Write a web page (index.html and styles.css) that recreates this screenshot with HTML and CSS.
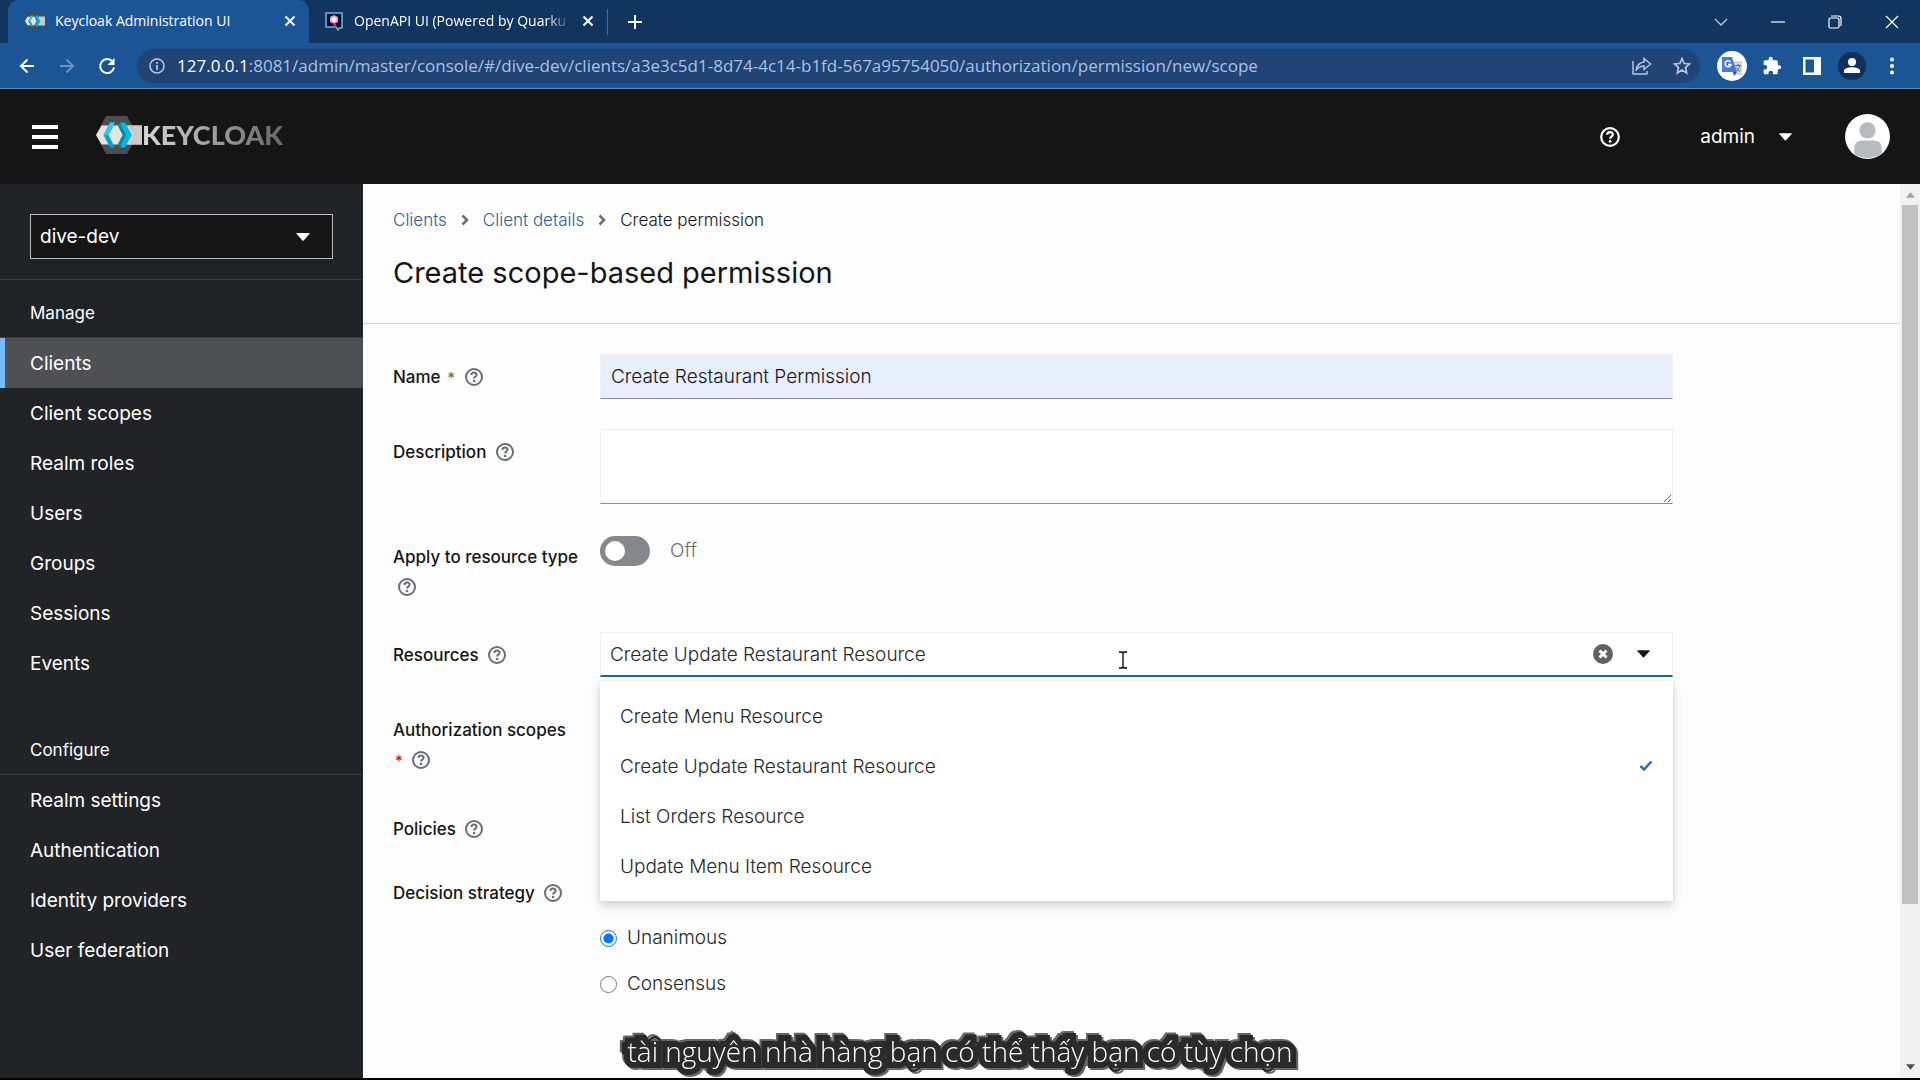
FILE: index.html
```html
<!DOCTYPE html>
<html lang="en">
<head>
    <meta charset="UTF-8">
    <meta name="viewport" content="width=device-width, initial-scale=1.0">
    <title>Keycloak Administration UI</title>
    <link rel="stylesheet" href="styles.css">
</head>
<body>
    <svg class="defs" aria-hidden="true">
        <symbol id="help" viewBox="0 0 20 20">
            <circle cx="10" cy="10" r="8" fill="none" stroke="currentColor" stroke-width="2"/>
            <path d="M7.400 8c0-3.200 5.200-3.200 5.200-.2 0 1.800-2.500 1.800-2.500 3.700" fill="none" stroke="currentColor" stroke-width="2"/>
            <circle cx="10.100" cy="14" r="1.300" fill="currentColor"/>
        </symbol>
        <symbol id="caret" viewBox="0 0 14 8">
            <path d="M1 0h12q1 .3.4 1L7.600 7.600q-.6.6-1.200 0L.6 1Q0 .3 1 0z" fill="currentColor"/>
        </symbol>
        <symbol id="close" viewBox="0 0 12 12">
            <path d="M1.500 1.500l9 9m0-9l-9 9" fill="none" stroke="currentColor" stroke-width="2"/>
        </symbol>
        <symbol id="angle" viewBox="0 0 8 12">
            <path d="M1.500 1.500L6 6l-4.500 4.500" fill="none" stroke="currentColor" stroke-width="2.500"/>
        </symbol>
        <symbol id="mark" viewBox="0 0 46 38">
            <path d="M10 0h21l10.500 19L31 38H10L0 19z" fill="#4d4d4d"/>
            <path d="M5.500 9.500H46v19H5.500L0 19z" fill="#e4e4e4"/>
            <path d="M32 9.500h14v19H32l5-9.500z" fill="#c9c9c9"/>
            <path d="M14 6.500h5L12.500 19 19 31.500h-5L7.500 19z" fill="#00a5cb"/>
            <path d="M14 6.500h5L12.500 19h-5z" fill="#33c6e9"/>
            <path d="M24 6.500h5L36 19l-7 12.500h-5L30.500 19z" fill="#00b8e3"/>
            <path d="M24 6.500L30.500 19 24 31.500l-2-3.500 4.500-9L22 10z" fill="#008aaa"/>
        </symbol>
    </svg>

    <div class="tabstrip">
        <div class="tab active">
            <svg class="favicon" aria-hidden="true"><use href="#mark"/></svg>
            <span class="tab-title">Keycloak Administration UI</span>
            <button type="button" class="icon-btn" aria-label="Close tab"><svg width="12" height="12"><use href="#close"/></svg></button>
        </div>
        <div class="tab">
            <svg class="favicon" viewBox="0 0 20 20" aria-hidden="true">
                <path d="M2 2h16v15h-3l-1 2-2-3H2z" fill="#0b0b2e" stroke="#6fb7e8" stroke-width="1.500"/>
                <path d="M10 4l4 2v5l-4 2-4-2V6z" fill="#e8a3c4"/>
                <circle cx="10" cy="8.500" r="2.200" fill="#fff"/>
                <path d="M9 12l2 0 2 5-3-2z" fill="#d2436e"/>
            </svg>
            <span class="tab-title faded">OpenAPI UI (Powered by Quarku</span>
            <button type="button" class="icon-btn" aria-label="Close tab"><svg width="12" height="12"><use href="#close"/></svg></button>
        </div>
        <button type="button" class="icon-btn new-tab" aria-label="New tab">
            <svg width="14" height="14" viewBox="0 0 14 14"><path d="M7 0v14M0 7h14" stroke="#fff" stroke-width="2"/></svg>
        </button>
        <div class="window-buttons">
            <button type="button" class="icon-btn" aria-label="Search tabs"><svg width="14" height="14" viewBox="0 0 14 14"><path d="M1 4l6 6 6-6" fill="none" stroke="#b7cdf0" stroke-width="1.300"/></svg></button>
            <button type="button" class="icon-btn" aria-label="Minimize"><svg width="14" height="14" viewBox="0 0 14 14"><path d="M0 7h14" stroke="#fff" stroke-width="1.200"/></svg></button>
            <button type="button" class="icon-btn" aria-label="Restore"><svg width="14" height="14" viewBox="0 0 14 14" fill="none" stroke="#fff" stroke-width="1.200"><rect x="1" y="3" width="10" height="10" rx="1.500"/><path d="M3 1h7.500q2.500 0 2.500 2.500V11"/></svg></button>
            <button type="button" class="icon-btn" aria-label="Close"><svg width="14" height="14" viewBox="0 0 14 14"><path d="M1 1l12 12m0-12L1 13" stroke="#fff" stroke-width="1.200"/></svg></button>
        </div>
    </div>

    <div class="toolbar">
        <button type="button" class="icon-btn" aria-label="Back"><svg width="16" height="16" viewBox="0 0 16 16"><path d="M15 8H2m6.500-6.500L2 8l6.500 6.500" fill="none" stroke="#fff" stroke-width="2"/></svg></button>
        <button type="button" class="icon-btn" aria-label="Forward"><svg width="16" height="16" viewBox="0 0 16 16"><path d="M1 8h13M7.500 1.500L14 8l-6.500 6.500" fill="none" stroke="#6f93c4" stroke-width="2"/></svg></button>
        <button type="button" class="icon-btn" aria-label="Reload"><svg width="18" height="18" viewBox="0 0 18 18"><path d="M14.500 4.500A7 7 0 1 0 16 10.500" fill="none" stroke="#fff" stroke-width="2"/><path d="M16.500 1v7h-7z" fill="#fff"/></svg></button>
        <div class="address">
            <svg width="16" height="16" viewBox="0 0 16 16" aria-hidden="true"><circle cx="8" cy="8" r="7" fill="none" stroke="#b9cbe6" stroke-width="1.500"/><path d="M8 7v5M8 4v1.800" stroke="#b9cbe6" stroke-width="1.700"/></svg>
            <span class="url"><b>127.0.0.1</b>:8081/admin/master/console/#/dive-dev/clients/a3e3c5d1-8d74-4c14-b1fd-567a95754050/authorization/permission/new/scope</span>
            <button type="button" class="icon-btn" aria-label="Share"><svg width="20" height="18" viewBox="0 0 20 18" fill="none" stroke="#b3c6e4" stroke-width="1.500"><path d="M1 4v13h14v-3"/><path d="M12 5V1.500L18.500 7 12 12.500V9q-5 0-8 4.500Q5 6 12 5z"/></svg></button>
            <button type="button" class="icon-btn" aria-label="Bookmark"><svg width="18" height="18" viewBox="0 0 18 18"><path d="M9 1.500l2.200 5 5.300.5-4 3.600 1.200 5.300L9 13l-4.700 2.900 1.200-5.300-4-3.600 5.300-.5z" fill="none" stroke="#b3c6e4" stroke-width="1.700"/></svg></button>
        </div>
        <div class="extensions">
            <button type="button" class="icon-btn" aria-label="Translate">
                <svg width="30" height="30" viewBox="0 0 30 30"><circle cx="15" cy="15" r="15" fill="#fff"/><path d="M13 10h12v14H17z" fill="#d3d7dc"/><path d="M5 6h10l5 15H5z" fill="#4a78d4"/><path d="M16 21l4 0-3 4z" fill="#2a4f9e"/><path d="M13.500 11a3 3 0 1 0 .5 2.500h-3" fill="none" stroke="#fff" stroke-width="1.500"/><path d="M18.500 14.500h5.500m-3-1.500v1.500m2 0q-1 4-3.500 5.500m-.5-3.500q1.500 3 4 4" fill="none" stroke="#5f6b7c" stroke-width="1"/></svg>
            </button>
            <button type="button" class="icon-btn" aria-label="Extensions"><svg width="20" height="20" viewBox="0 0 24 24"><path d="M20.500 11H19V7a2 2 0 0 0-2-2h-4V3.500a2.500 2.500 0 0 0-5 0V5H4a2 2 0 0 0-2 2v3.800h1.500a2.700 2.700 0 0 1 0 5.400H2V20a2 2 0 0 0 2 2h3.800v-1.500a2.700 2.700 0 0 1 5.400 0V22H17a2 2 0 0 0 2-2v-4h1.500a2.500 2.500 0 0 0 0-5z" fill="#fff"/></svg></button>
            <button type="button" class="icon-btn" aria-label="Side panel"><svg width="18" height="18" viewBox="0 0 18 18"><path d="M0 0h18v18H0zM2.500 2.500v13H11v-13z" fill="#fff" fill-rule="evenodd"/></svg></button>
            <button type="button" class="icon-btn" aria-label="Profile"><svg width="28" height="28" viewBox="0 0 28 28"><circle cx="14" cy="14" r="14" fill="#14305a"/><circle cx="14" cy="10" r="4" fill="#fff"/><path d="M6 21v-2c0-5 16-5 16 0v2z" fill="#fff"/></svg></button>
            <button type="button" class="icon-btn" aria-label="Menu"><svg width="4" height="18" viewBox="0 0 4 18" fill="#fff"><circle cx="2" cy="2.500" r="2"/><circle cx="2" cy="9" r="2"/><circle cx="2" cy="15.500" r="2"/></svg></button>
        </div>
    </div>

    <header class="masthead">
        <button type="button" class="icon-btn" aria-label="Global navigation">
            <svg width="26" height="24" viewBox="0 0 26 24" fill="#fff"><path d="M0 0h26v4H0zM0 10h26v4H0zM0 20h26v4H0z"/></svg>
        </button>
        <a href="#" class="logo"><svg width="46" height="38" aria-hidden="true"><use href="#mark"/></svg><span>KEYCLOAK</span></a>
        <button type="button" class="icon-btn help-top" aria-label="Help"><svg width="22" height="22"><use href="#help"/></svg></button>
        <button type="button" class="user-btn">admin <svg width="13" height="8" aria-hidden="true"><use href="#caret"/></svg></button>
        <svg class="avatar" viewBox="0 0 44 44" role="img" aria-label="Avatar">
            <circle cx="22" cy="22" r="22" fill="#fff"/>
            <circle cx="22" cy="16" r="8" fill="#b8bbbe"/>
            <path d="M9 39.500V34q0-8 8-8h11q8 0 8 8v4.500Q23 47 9 39.500z" fill="#b8bbbe"/>
        </svg>
    </header>

    <div class="page">
        <nav class="sidebar" aria-label="Global">
            <div class="realm">
                <select class="realm-select" aria-label="Realm">
                    <option>dive-dev</option>
                </select>
                <svg class="realm-caret" width="14" height="8" aria-hidden="true"><use href="#caret"/></svg>
            </div>
            <h2 class="nav-title">Manage</h2>
            <ul class="nav-list">
                <li><a href="#" class="current">Clients</a></li>
                <li><a href="#">Client scopes</a></li>
                <li><a href="#">Realm roles</a></li>
                <li><a href="#">Users</a></li>
                <li><a href="#">Groups</a></li>
                <li><a href="#">Sessions</a></li>
                <li><a href="#">Events</a></li>
            </ul>
            <h2 class="nav-title">Configure</h2>
            <ul class="nav-list">
                <li><a href="#">Realm settings</a></li>
                <li><a href="#">Authentication</a></li>
                <li><a href="#">Identity providers</a></li>
                <li><a href="#">User federation</a></li>
            </ul>
        </nav>

        <main class="main">
            <div class="page-header">
                <nav class="breadcrumb" aria-label="Breadcrumb">
                    <a href="#">Clients</a>
                    <svg width="8" height="12" aria-hidden="true"><use href="#angle"/></svg>
                    <a href="#">Client details</a>
                    <svg width="8" height="12" aria-hidden="true"><use href="#angle"/></svg>
                    <span>Create permission</span>
                </nav>
                <h1>Create scope-based permission</h1>
            </div>

            <form class="form">
                <div class="label">
                    <label for="name">Name <span class="required">*</span></label>
                    <button type="button" class="help" aria-label="Help for name"><svg width="20" height="20"><use href="#help"/></svg></button>
                </div>
                <input type="text" id="name" class="control autofill" value="Create Restaurant Permission">

                <div class="label">
                    <label for="description">Description</label>
                    <button type="button" class="help" aria-label="Help for description"><svg width="20" height="20"><use href="#help"/></svg></button>
                </div>
                <textarea id="description" class="control area"></textarea>

                <div class="label">
                    <label for="applyType">Apply to resource type</label>
                    <button type="button" class="help" aria-label="Help for resource type"><svg width="20" height="20"><use href="#help"/></svg></button>
                </div>
                <div class="switch">
                    <input type="checkbox" id="applyType" class="toggle">
                    <span>Off</span>
                </div>

                <div class="label">
                    <label for="resources">Resources</label>
                    <button type="button" class="help" aria-label="Help for resources"><svg width="20" height="20"><use href="#help"/></svg></button>
                </div>
                <div class="typeahead">
                    <input type="text" id="resources" value="Create Update Restaurant Resource">
                    <button type="button" class="icon-btn" aria-label="Clear"><svg width="20" height="20" viewBox="0 0 20 20"><circle cx="10" cy="10" r="10" fill="#5f6164"/><path d="M6.500 6.500l7 7m0-7l-7 7" stroke="#fff" stroke-width="3"/></svg></button>
                    <button type="button" class="icon-btn" aria-label="Options"><svg width="13" height="8"><use href="#caret"/></svg></button>
                    <ul class="menu">
                        <li><button type="button">Create Menu Resource</button></li>
                        <li><button type="button">Create Update Restaurant Resource <svg width="14" height="12" viewBox="0 0 14 12" aria-hidden="true"><path d="M1.500 6L5 9.500l7.500-8" fill="none" stroke="#2b6cb5" stroke-width="2.500"/></svg></button></li>
                        <li><button type="button">List Orders Resource</button></li>
                        <li><button type="button">Update Menu Item Resource</button></li>
                    </ul>
                    <svg class="pointer" width="8" height="18" viewBox="0 0 8 18" aria-hidden="true"><path d="M0 1h3l1 1 1-1h3M4 2v14M0 17h3l1-1 1 1h3" fill="none" stroke="#000" stroke-width="1.300"/></svg>
                </div>

                <div class="label">
                    <label for="scopes">Authorization scopes <span class="required red">*</span></label>
                    <button type="button" class="help" aria-label="Help for scopes"><svg width="20" height="20"><use href="#help"/></svg></button>
                </div>
                <input type="text" id="scopes" class="control">

                <div class="label">
                    <label for="policies">Policies</label>
                    <button type="button" class="help" aria-label="Help for policies"><svg width="20" height="20"><use href="#help"/></svg></button>
                </div>
                <input type="text" id="policies" class="control">

                <div class="label top">
                    <span id="strategy">Decision strategy</span>
                    <button type="button" class="help" aria-label="Help for strategy"><svg width="20" height="20"><use href="#help"/></svg></button>
                </div>
                <div class="radios" role="radiogroup" aria-labelledby="strategy">
                    <label><input type="radio" name="strategy" checked> Unanimous</label>
                    <label><input type="radio" name="strategy"> Consensus</label>
                </div>
            </form>
        </main>

        <div class="scrollbar" aria-hidden="true">
            <svg width="9" height="6" viewBox="0 0 10 6"><path d="M5 0l5 6H0z" fill="#a0a0a0"/></svg>
            <div class="track"><div class="thumb"></div></div>
            <svg width="9" height="6" viewBox="0 0 10 6"><path d="M0 0h10L5 6z" fill="#505050"/></svg>
        </div>
    </div>

    <p class="caption" lang="vi">tài nguyên nhà hàng bạn có thể thấy bạn có tùy chọn</p>
</body>
</html>
```
FILE: styles.css
```css
* {
    box-sizing: border-box;
}
body {
    margin: 0;
    height: 100vh;
    display: flex;
    flex-direction: column;
    overflow: hidden;
    font-family: Inter, "Liberation Sans", sans-serif;
    font-size: 19px;
    color: #151515;
    background: #fdfdfd;
    border-bottom: 2px solid #000;
}
button, input, select, textarea {
    font: inherit;
    color: inherit;
}
a {
    text-decoration: none;
}
svg {
    flex: none;
}
.defs {
    position: absolute;
    width: 0;
    height: 0;
}
.icon-btn {
    display: flex;
    align-items: center;
    justify-content: center;
    padding: 0;
    border: none;
    background: none;
}

/* Browser tabs */
.tabstrip {
    display: flex;
    align-items: center;
    height: 43px;
    padding-left: 8px;
    background: #11355f;
    color: #fff;
    font-family: "Open Sans", sans-serif;
    font-size: 14px;
}
.tab {
    display: flex;
    align-items: center;
    gap: 10px;
    width: 298px;
    height: 43px;
    padding: 0 13px 2px 15px;
}
.tab.active {
    width: 301px;
    padding-left: 17px;
    background: #1b5596;
    border-radius: 10px 10px 0 0;
}
.favicon {
    width: 20px;
    height: 20px;
}
.tab-title {
    flex: 1;
    overflow: hidden;
    white-space: nowrap;
}
.faded {
    mask-image: linear-gradient(to right, #000 88%, transparent);
}
.new-tab {
    height: 26px;
    padding-left: 20px;
    border-left: 1px solid #4a6c98;
}
.window-buttons {
    display: flex;
    margin-left: auto;
}
.window-buttons .icon-btn {
    width: 57px;
    height: 36px;
}

/* Address bar */
.toolbar {
    display: flex;
    align-items: center;
    height: 46px;
    padding: 0 16px 0 7px;
    background: #1b5596;
    border-bottom: 1px solid #6486b5;
}
.toolbar > .icon-btn {
    width: 40px;
}
.address {
    flex: 1;
    display: flex;
    align-items: center;
    gap: 21px;
    height: 34px;
    margin-left: 10px;
    padding: 0 9px 0 12px;
    border-radius: 17px;
    background: #1f4475;
    color: #a9c3e6;
    font-family: "Open Sans", sans-serif;
    font-size: 17px;
}
.url {
    flex: 1;
    margin-left: -9px;
    overflow: hidden;
    white-space: nowrap;
}
.url b {
    color: #fff;
    font-weight: 400;
}
.extensions {
    display: flex;
    margin-left: 12px;
}
.extensions .icon-btn {
    width: 40px;
    height: 30px;
}
.extensions .icon-btn:last-child {
    margin-right: -8px;
}

/* Masthead */
.masthead {
    display: flex;
    align-items: center;
    height: 95px;
    padding: 0 30px 0 32px;
    background: #151515;
    color: #fff;
}
.logo {
    display: flex;
    align-items: center;
    margin-left: 38px;
    padding-bottom: 4px;
}
.logo span {
    font-family: Lato, sans-serif;
    font-size: 27px;
    font-weight: 900;
    background: linear-gradient(to right, #d8d8d8, #666);
    background-clip: text;
    color: transparent;
}
.help-top {
    margin-left: auto;
}
.user-btn {
    display: flex;
    align-items: center;
    gap: 24px;
    margin-left: 79px;
    margin-right: 53px;
    padding: 0;
    border: none;
    background: none;
}
.avatar {
    width: 45px;
    height: 45px;
}

/* Sidebar */
.page {
    flex: 1;
    display: flex;
    min-height: 0;
}
.sidebar {
    width: 363px;
    flex: none;
    background: #222327;
    color: #fff;
}
.realm {
    position: relative;
    padding: 30px 30px 20px;
    border-bottom: 1px solid #3c3f42;
}
.realm-select {
    display: block;
    width: 100%;
    height: 45px;
    padding: 0 9px;
    appearance: none;
    border: 1px solid #b8bbbe;
    border-radius: 0;
    background: #151515;
}
.realm-caret {
    position: absolute;
    right: 53px;
    top: 49px;
}
.nav-title {
    margin: 0;
    padding: 19px 30px 10px;
    border-bottom: 1px solid #3c3f42;
    font-size: 17px;
    line-height: 28px;
    font-weight: 400;
}
.nav-list {
    margin: 0 0 29px;
    padding: 0;
    list-style: none;
}
.nav-list a {
    display: block;
    height: 50px;
    padding-left: 30px;
    line-height: 52px;
    color: #fff;
}
.nav-list .current {
    padding-left: 25px;
    border-left: 5px solid #73bcf7;
    background: #4f5053;
}

/* Content */
.main {
    flex: 1;
    background: #fdfdfd;
}
.page-header {
    padding: 20px 30px 30px;
    border-bottom: 1px solid #d2d2d2;
}
.breadcrumb {
    display: flex;
    align-items: center;
    gap: 14px;
    font-size: 17px;
    font-weight: 300;
    line-height: 32px;
}
.breadcrumb a {
    color: #2a5f9b;
}
.breadcrumb svg {
    color: #6a6e73;
}
h1 {
    margin: 17px 0 0;
    font-size: 29px;
    line-height: 40px;
    font-weight: 400;
}
.form {
    display: grid;
    grid-template-columns: 187px 1fr;
    gap: 30px 20px;
    align-items: start;
    max-width: 1340px;
    padding: 30px;
}
.label {
    padding-top: 8px;
    font-size: 17px;
    line-height: 30px;
    font-weight: 500;
}
.label.top {
    padding-top: 0;
    line-height: 24px;
}
.required {
    margin-left: 2px;
    color: #6a6e73;
    font-size: 15px;
}
.red {
    color: #c9190b;
}
.help {
    margin-left: 4px;
    padding: 0;
    border: none;
    background: none;
    color: #6a6e73;
    line-height: 20px;
    vertical-align: -4px;
}
.help svg {
    display: block;
}
.control {
    width: 100%;
    height: 45px;
    padding: 0 10px;
    border: 1px solid #f0f0f0;
    border-bottom-color: #8a8d90;
    border-radius: 0;
    background: #fff;
    font-weight: 300;
}
.autofill {
    background: #e8eefc;
}
.area {
    display: block;
    height: 75px;
    resize: vertical;
}
.switch {
    display: flex;
    align-items: center;
    gap: 20px;
    color: #6a6e73;
    font-weight: 300;
    line-height: 34px;
}
.toggle {
    appearance: none;
    width: 50px;
    height: 30px;
    margin: 0;
    padding: 5px;
    border-radius: 15px;
    background: #87888b;
}
.toggle::before {
    content: "";
    display: block;
    width: 20px;
    height: 20px;
    border-radius: 50%;
    background: #fff;
}
.typeahead {
    position: relative;
    display: flex;
    align-items: center;
    gap: 24px;
    height: 45px;
    padding-right: 22px;
    border: 1px solid #f0f0f0;
    border-bottom: 2px solid #1f6799;
    background: #fff;
    color: #26282a;
    font-weight: 300;
}
.typeahead input {
    flex: 1;
    padding: 0 9px;
    border: none;
    outline: none;
    background: none;
}
.typeahead > .icon-btn {
    color: #151515;
}
.menu {
    position: absolute;
    top: 48px;
    left: -1px;
    right: -1px;
    z-index: 1;
    margin: 0;
    padding: 10px 0;
    list-style: none;
    background: #fff;
    box-shadow: 0 5px 10px rgba(0, 0, 0, 0.16), 0 0 4px rgba(0, 0, 0, 0.08);
}
.menu button {
    display: flex;
    align-items: center;
    justify-content: space-between;
    width: 100%;
    height: 50px;
    padding: 0 20px;
    border: none;
    background: none;
    text-align: left;
}
.pointer {
    position: absolute;
    top: 18px;
    left: 518px;
}
.radios {
    display: grid;
    gap: 16px;
    padding-top: 42px;
    line-height: 30px;
    color: #26282a;
    font-weight: 300;
}
.radios label {
    display: flex;
    align-items: center;
    gap: 10px;
}
.radios input {
    width: 17px;
    height: 17px;
    margin: 0;
}

/* Scrollbar */
.scrollbar {
    display: flex;
    flex-direction: column;
    align-items: center;
    width: 20px;
    padding: 8px 0;
    background: #f1f1f1;
}
.track {
    flex: 1;
    width: 16px;
    padding: 7px 0;
}
.thumb {
    height: 82%;
    background: #c1c1c1;
}

/* Video subtitle laid over the page */
.caption {
    position: absolute;
    left: 0;
    right: 0;
    bottom: 6px;
    margin: 0;
    z-index: 2;
    text-align: center;
    font-family: "Open Sans", sans-serif;
    font-size: 28px;
    font-weight: 300;
    line-height: 46px;
    color: #fff;
    -webkit-text-stroke: 12px #2a2a2a;
    paint-order: stroke fill;
    filter: drop-shadow(2px 2px 0 #666) drop-shadow(-2px -2px 0 #666);
}
```
